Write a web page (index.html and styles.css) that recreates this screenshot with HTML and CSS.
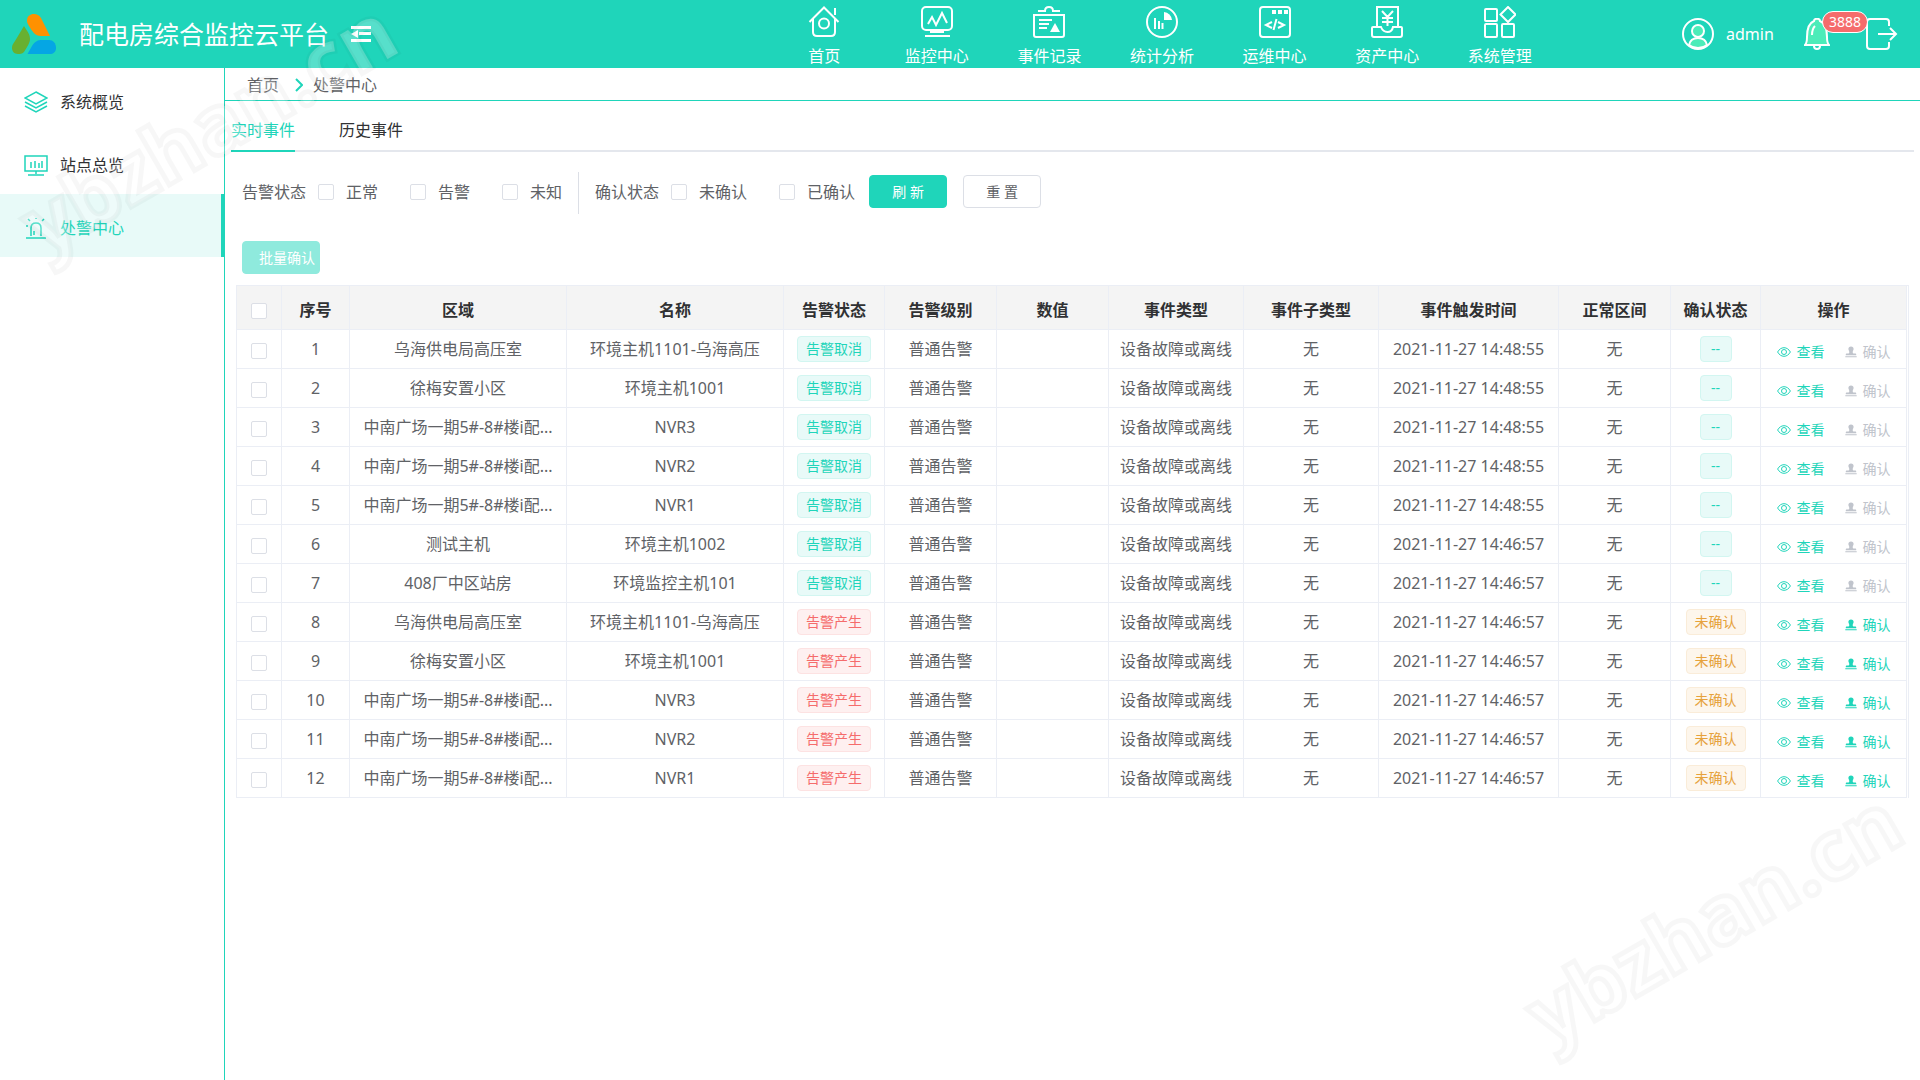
FILE: index.html
```html
<!DOCTYPE html>
<html lang="zh-CN">
  <head>
    <meta charset="UTF-8" />
    <title>配电房综合监控云平台</title>
    <link rel="stylesheet" href="styles.css">
  </head>
  <body>
    <svg class="sprite" aria-hidden="true">
      <symbol id="icon-eye" viewBox="0 0 14 12">
        <path d="M.6 6C2.2 3.2 4.400 1.700 7 1.700S11.800 3.200 13.400 6C11.800 8.800 9.600 10.300 7 10.300S2.200 8.800.6 6Z" />
        <circle cx="7" cy="6" r="2.500" />
      </symbol>
      <symbol id="icon-stamp" viewBox="0 0 12 12">
        <path d="M6 .5a2.600 2.600 0 0 1 2.600 2.600c0 1.300-.9 1.900-.9 3.200 0 .8.500 1.200 1.300 1.200h1.200c.7 0 1 .4 1 1v.7H.8v-.7c0-.6.3-1 1-1H3c.8 0 1.300-.4 1.300-1.200 0-1.300-.9-1.900-.9-3.200A2.600 2.600 0 0 1 6 .5ZM.3 10.300h11.400v1H.3Z" />
      </symbol>
    </svg>

    <header class="header">
      <svg class="logo" viewBox="0 0 46 42">
        <path fill="#ff9100" d="M16 8C16 3 19 1 23 1c3 0 5 1 7 4l9 18h-9c-6 0-9-5-12-10-1-2-2-3-2-5Z" />
        <path fill="#68b030" d="M13 13c3 5 6 8 6 13 0 4-3 8-6 13-2 2-4 2-6 2-4 0-6-3-6-6s1-4 3-7Z" />
        <path fill="#05a6e4" d="M16.500 41l4.500-8c3-5 6-6 10-6h7c4 0 7 3 7 8 0 4-3 6-6 6Z" />
      </svg>
      <h1 class="title">配电房综合监控云平台</h1>
      <button type="button" class="fold" aria-label="收起菜单">
        <svg width="20" height="18" viewBox="0 0 20 18" fill="#fff"><path d="M0 1h20v3H0zM8 7h12v3H8zM0 14h20v3H0zM0 9l7-4v8z" /></svg>
      </button>

      <nav class="nav">
        <a href="#">
          <svg viewBox="0 0 32 32"><path d="M1.500 16 16 1.500 30.500 16M5 13v13q0 4 4 4h14q4 0 4-4V13M27 2v7" /><circle cx="16" cy="17.500" r="5" /></svg>
          首页
        </a>
        <a href="#">
          <svg viewBox="0 0 32 32"><rect x="1" y="1" width="30" height="23" rx="4" /><path d="M7 18l4-7 4 8 6-12 5 10M9 26h14M4 30h25" /></svg>
          监控中心
        </a>
        <a href="#">
          <svg viewBox="0 0 32 32"><path d="M1 9h30v20q0 2-2 2H3q-2 0-2-2ZM5 5h7q0-4 4-4t4 4h7M6 14h13M6 18h10M6 22h8" /><path class="solid" d="M22 17l5 9H17z" /></svg>
          事件记录
        </a>
        <a href="#">
          <svg viewBox="0 0 32 32"><circle cx="16" cy="16" r="15" /><path d="M9 12v11M13 15v8M16.500 17v6" /><path class="solid" d="M18 6a9 9 0 0 1 8 8h-8z" /></svg>
          统计分析
        </a>
        <a href="#">
          <svg viewBox="0 0 32 32"><rect x="1" y="1" width="30" height="30" rx="3" /><path d="M13 16l-6 3 6 3M19 16l6 3-6 3M17.500 13l-3 11" /><path class="solid" d="M13 4h4v4h-4zM19 4h4v4h-4zM25 4h4v4h-4z" /></svg>
          运维中心
        </a>
        <a href="#">
          <svg viewBox="0 0 32 32"><path d="M6 21V1h21v20M1 22q0-1 1-1h8q2 5 6.500 5T22 21h8q1 0 1 1v7q0 2-2 2H3q-2 0-2-2ZM11 5l5.500 6L22 5M16.500 11v9M11 12h11M11 16h11" /></svg>
          资产中心
        </a>
        <a href="#">
          <svg viewBox="0 0 32 32"><rect x="1" y="3" width="12" height="12" rx="1" /><rect x="1" y="18" width="12" height="13" rx="1" /><rect x="18" y="18" width="12" height="13" rx="1" /><path d="M24 1l7.500 7.500L24 16l-7.500-7.500Z" /></svg>
          系统管理
        </a>
      </nav>

      <div class="user">
        <svg class="avatar" viewBox="0 0 32 32"><circle cx="16" cy="16" r="15" /><circle class="tint" cx="16" cy="13" r="6" /><path class="tint" d="M7 27c1-5 5-7 9-7s8 2 9 7c-5 4-13 4-18 0Z" /></svg>
        <span class="username">admin</span>
        <button type="button" class="bell" aria-label="消息">
          <svg viewBox="0 0 26 32"><path class="tint" d="M1 27c2-2 2-4 2-8 0-9 2-14 7-16 0-3 6-3 6 0 5 2 7 7 7 16 0 4 0 6 2 8Z" /><path d="M8 17c0-5 1-7 3-9M10 28c0 4 6 4 6 0" /></svg>
          <span class="badge">3888</span>
        </button>
        <button type="button" class="logout" aria-label="退出">
          <svg viewBox="0 0 32 32"><path d="M23 8V4q0-3-3-3H4Q1 1 1 4v24q0 3 3 3h16q3 0 3-3v-4M12 16h18M24 10l6 6-6 6" /></svg>
        </button>
      </div>
    </header>

    <div class="container">
      <aside class="sidebar">
        <a href="#">
          <svg viewBox="0 0 24 24"><path d="M12 2l11 6-11 6L1 8ZM1 12l11 6 11-6M1 16l11 6 11-6" /></svg>
          系统概览
        </a>
        <a href="#">
          <svg viewBox="0 0 24 24"><path d="M1 3h22v15H1ZM7 9v6M11 8v7M15 10v5M18 8v7M12 18v3M4 22h16" /></svg>
          站点总览
        </a>
        <a href="#" class="active">
          <svg viewBox="0 0 24 24"><path d="M7 20v-8q0-5 5-5t5 5v8M2 22h20M10 19v-4M2 10h2M4 3l2 2M12 2v1M20 3l-2 2" /></svg>
          处警中心
        </a>
      </aside>

      <main class="main">
        <div class="breadcrumb">
          <a href="#">首页</a>
          <svg width="8" height="14" viewBox="0 0 8 14"><path d="M1 1l6 6-6 6" /></svg>
          <span>处警中心</span>
        </div>

        <div class="tabs">
          <button type="button" class="active">实时事件</button>
          <button type="button">历史事件</button>
        </div>

        <form class="filter">
          <span class="filter-name">告警状态</span>
          <label><input type="checkbox" />正常</label>
          <label><input type="checkbox" />告警</label>
          <label><input type="checkbox" />未知</label>
          <span class="divider"></span>
          <span class="filter-name">确认状态</span>
          <label><input type="checkbox" />未确认</label>
          <label><input type="checkbox" />已确认</label>
          <button type="button" class="btn primary">刷 新</button>
          <button type="reset" class="btn">重 置</button>
        </form>

        <button type="button" class="btn batch" disabled>批量确认</button>

        <div class="table-box">
          <table>
            <colgroup>
              <col class="w-check" />
              <col class="w-index" />
              <col class="w-name" />
              <col class="w-name" />
              <col class="w-status" />
              <col class="w-level" />
              <col class="w-level" />
              <col class="w-type" />
              <col class="w-type" />
              <col class="w-time" />
              <col class="w-level" />
              <col class="w-confirm" />
              <col class="w-action" />
            </colgroup>
            <thead>
              <tr>
                <th><input type="checkbox" aria-label="全选" /></th>
                <th>序号</th>
                <th>区域</th>
                <th>名称</th>
                <th>告警状态</th>
                <th>告警级别</th>
                <th>数值</th>
                <th>事件类型</th>
                <th>事件子类型</th>
                <th>事件触发时间</th>
                <th>正常区间</th>
                <th>确认状态</th>
                <th>操作</th>
              </tr>
            </thead>
            <tbody id="eventList"></tbody>
          </table>
        </div>
      </main>
    </div>

    <div class="watermark watermark-top" aria-hidden="true">ybzhan.cn</div>
    <div class="watermark watermark-bottom" aria-hidden="true">ybzhan.cn</div>

    <script>
      const events = [
        ["乌海供电局高压室", "环境主机1101-乌海高压", "14:48:55", false],
        ["徐梅安置小区", "环境主机1001", "14:48:55", false],
        ["中南广场一期5#-8#楼i配...", "NVR3", "14:48:55", false],
        ["中南广场一期5#-8#楼i配...", "NVR2", "14:48:55", false],
        ["中南广场一期5#-8#楼i配...", "NVR1", "14:48:55", false],
        ["测试主机", "环境主机1002", "14:46:57", false],
        ["408厂中区站房", "环境监控主机101", "14:46:57", false],
        ["乌海供电局高压室", "环境主机1101-乌海高压", "14:46:57", true],
        ["徐梅安置小区", "环境主机1001", "14:46:57", true],
        ["中南广场一期5#-8#楼i配...", "NVR3", "14:46:57", true],
        ["中南广场一期5#-8#楼i配...", "NVR2", "14:46:57", true],
        ["中南广场一期5#-8#楼i配...", "NVR1", "14:46:57", true],
      ];

      const eventList = document.getElementById("eventList");
      eventList.innerHTML = events
        .map(function ([area, name, time, alarm], i) {
          return `
            <tr>
              <td><input type="checkbox" aria-label="选择第${i + 1}行" /></td>
              <td>${i + 1}</td>
              <td>${area}</td>
              <td>${name}</td>
              <td><span class="tag ${alarm ? "danger" : ""}">${alarm ? "告警产生" : "告警取消"}</span></td>
              <td>普通告警</td>
              <td></td>
              <td>设备故障或离线</td>
              <td>无</td>
              <td>2021-11-27 ${time}</td>
              <td>无</td>
              <td><span class="tag ${alarm ? "warning" : ""}">${alarm ? "未确认" : "--"}</span></td>
              <td>
                <div class="actions">
                  <button type="button"><svg class="eye"><use href="#icon-eye" /></svg>查看</button>
                  <button type="button" ${alarm ? "" : "disabled"}><svg class="stamp"><use href="#icon-stamp" /></svg>确认</button>
                </div>
              </td>
            </tr>`;
        })
        .join("");
    </script>
  </body>
</html>
```
FILE: styles.css
```css
* {
  box-sizing: border-box;
}
body {
  margin: 0;
  min-height: 100vh;
  display: flex;
  flex-direction: column;
  position: relative;
  font-family: "Noto Sans", "Noto Sans CJK SC", sans-serif;
  font-size: 16px;
  line-height: 24px;
  color: #606266;
  background: #fff;
}
a {
  color: inherit;
  text-decoration: none;
}
button {
  font: inherit;
  color: inherit;
  background: none;
  border: none;
  padding: 0;
  cursor: pointer;
}
svg {
  display: block;
  flex: none;
}
.sprite {
  position: absolute;
  width: 0;
  height: 0;
}

/* header */
.header {
  display: flex;
  align-items: center;
  height: 68px;
  background: #1fd5ba;
  color: #fff;
}
.logo {
  width: 46px;
  height: 42px;
  margin-left: 11px;
}
.title {
  margin: 0 0 0 22px;
  font-size: 25px;
  font-weight: normal;
  line-height: 36px;
  white-space: nowrap;
}
.fold {
  margin-left: 22px;
}
.nav {
  display: grid;
  grid-template-columns: repeat(7, 1fr);
  width: 788px;
  margin-left: auto;
  padding-top: 6px;
}
.nav a {
  display: flex;
  flex-direction: column;
  align-items: center;
  gap: 6px;
}
.nav svg,
.user svg {
  width: 32px;
  height: 32px;
  fill: none;
  stroke: #fff;
  stroke-width: 2;
}
.nav .solid {
  fill: #fff;
  stroke: none;
}
.user {
  display: flex;
  align-items: center;
  width: 364px;
  padding: 0 22px 0 126px;
}
.user .tint {
  fill: #4cecb9;
}
.username {
  margin-left: 12px;
}
.bell {
  position: relative;
  margin-left: auto;
}
.user .bell svg {
  width: 26px;
}
.badge {
  position: absolute;
  top: -7px;
  left: 18px;
  padding: 0 6px;
  border: 1px solid #fff;
  border-radius: 11px;
  background: #f56c6c;
  font-size: 14px;
  line-height: 20px;
}
.logout {
  margin-left: 36px;
}

/* layout */
.container {
  display: flex;
  flex: 1;
}
.sidebar {
  width: 225px;
  border-right: 1px solid #1fd5ba;
  flex: none;
}
.sidebar a {
  display: flex;
  align-items: center;
  gap: 12px;
  height: 63px;
  padding: 4px 0 0 24px;
  color: #303133;
}
.sidebar .active {
  color: #1fd5ba;
  background: #e8faf8;
  border-right: 3px solid #1fd5ba;
}
.sidebar svg {
  width: 24px;
  height: 24px;
  fill: none;
  stroke: #1fd5ba;
  stroke-width: 1.5;
}
.main {
  flex: 1;
  min-width: 0;
}
.breadcrumb {
  display: flex;
  align-items: center;
  height: 33px;
  padding: 2px 0 0 22px;
  border-bottom: 1px solid #1fd5ba;
}
.breadcrumb svg {
  margin: 0 10px 0 16px;
  fill: none;
  stroke: #1fd5ba;
  stroke-width: 2;
}
.tabs {
  display: flex;
  gap: 44px;
  margin: 0 6px;
  padding-top: 9px;
  border-bottom: 2px solid #e4e7ed;
  color: #303133;
}
.tabs button {
  height: 42px;
  margin-bottom: -2px;
  border-bottom: 2px solid transparent;
}
.tabs .active {
  color: #1fd5ba;
  border-color: #1fd5ba;
}

/* filter */
input[type="checkbox"] {
  appearance: none;
  width: 16px;
  height: 16px;
  margin: 0;
  border: 1px solid #dcdfe6;
  border-radius: 2px;
  background: #fff;
  vertical-align: middle;
}
input[type="checkbox"]:checked {
  background: #1fd5ba;
  border-color: #1fd5ba;
}
.filter {
  display: flex;
  align-items: center;
  height: 42px;
  margin: 20px 17px 0;
  padding-bottom: 3px;
}
.filter label {
  display: flex;
  align-items: center;
  gap: 12px;
  margin-right: 32px;
}
.filter-name {
  margin-right: 12px;
}
.divider {
  height: 42px;
  width: 1px;
  margin: 3px 16px 0 -16px;
  background: #dcdfe6;
}
.btn {
  height: 33px;
  min-width: 78px;
  border: 1px solid #dcdfe6;
  border-radius: 4px;
  font-size: 14px;
  line-height: 20px;
}
.filter .btn {
  margin-right: 16px;
}
.filter .btn.primary {
  margin-left: -18px;
  color: #fff;
  background: #1fd5ba;
  border-color: #1fd5ba;
}
.btn.batch {
  display: block;
  margin: 27px 0 0 17px;
  padding: 0 4px 0 16px;
  color: #fff;
  background: #8feadd;
  border-color: #8feadd;
}

/* table */
.table-box {
  margin: 11px 11px 0;
  padding-right: 2px;
  border: 1px solid #ebeef5;
  border-bottom: none;
}
table {
  width: 100%;
  table-layout: fixed;
  border-collapse: separate;
  border-spacing: 0;
  text-align: center;
}
.w-check { width: 45px; }
.w-index { width: 68px; }
.w-name { width: 217px; }
.w-status { width: 101px; }
.w-level { width: 112px; }
.w-type { width: 135px; }
.w-time { width: 180px; }
.w-confirm { width: 90px; }
.w-action { width: 146px; }
th,
td {
  padding: 0;
  border-right: 1px solid #ebeef5;
  border-bottom: 1px solid #ebeef5;
  white-space: nowrap;
}
th {
  height: 44px;
  padding-top: 4px;
  color: #303133;
  background: #f4f4f4;
}
td {
  height: 39px;
}
.tag {
  display: inline-block;
  min-width: 32px;
  padding: 0 8px;
  border: 1px solid #d2f6f1;
  border-radius: 4px;
  background: #e8faf8;
  color: #1fd5ba;
  font-size: 14px;
  line-height: 24px;
  vertical-align: middle;
}
.tag.danger {
  color: #f56c6c;
  background: #fef0f0;
  border-color: #fde2e2;
}
.tag.warning {
  color: #e6a23c;
  background: #fdf6ec;
  border-color: #faecd8;
}
.actions {
  display: flex;
  justify-content: center;
  gap: 20px;
  padding-top: 5px;
  font-size: 14px;
}
.actions button {
  display: flex;
  align-items: center;
  gap: 6px;
  color: #1fd5ba;
}
.actions button:disabled {
  color: #c0c4cc;
  cursor: not-allowed;
}
.eye {
  width: 14px;
  height: 12px;
  fill: none;
  stroke: currentColor;
}
.stamp {
  width: 12px;
  height: 12px;
  fill: currentColor;
}

.watermark {
  position: absolute;
  font: bold 82px/112px "Open Sans", sans-serif;
  color: rgba(255, 255, 255, 0.25);
  -webkit-text-stroke: 5px rgba(0, 0, 0, 0.03);
  transform: rotate(-30deg);
  pointer-events: none;
}
.watermark-top {
  top: 70px;
  left: 0;
}
.watermark-bottom {
  right: 0;
  bottom: 108px;
}
```
